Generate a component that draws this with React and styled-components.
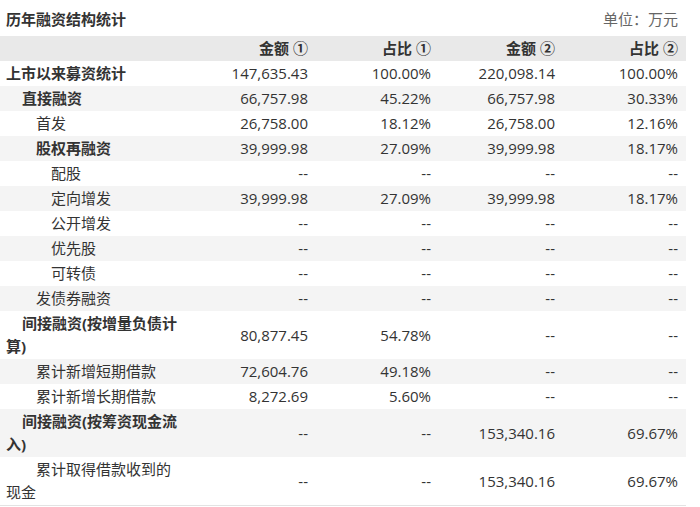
import styled, { createGlobalStyle } from "styled-components";

const GlobalStyle = createGlobalStyle`
  body {
    margin: 0;
    background: #fff;
    font-family: "Open Sans", "Noto Sans CJK SC", sans-serif;
    color: #333;
  }
`;

const Wrapper = styled.div`
  width: 686px;
`;

const TitleBar = styled.div`
  height: 36px;
  display: flex;
  justify-content: space-between;
  align-items: center;
  padding: 0 8px 0 6px;
`;

const Title = styled.h3`
  margin: 0;
  font-size: 15px;
  font-weight: bold;
  color: #333;
`;

const Unit = styled.span`
  font-size: 15px;
  color: #666;
`;

const Table = styled.table`
  width: 100%;
  border-collapse: collapse;
  table-layout: fixed;
  font-size: 15px;
  border-bottom: 1px solid #e3e3e3;
`;

const HeadRow = styled.tr`
  background: #e9e9e9;
`;

const HeadCell = styled.th`
  height: 25px;
  padding: 0 8px 0 6px;
  text-align: right;
  font-weight: bold;
  line-height: 23px;
`;

const Row = styled.tr`
  background: ${({ $odd }) => ($odd ? "#f4f4f4" : "#fff")};
`;

const NameCell = styled.td`
  padding: 1px 8px 1px 6px;
  line-height: 23px;
  text-indent: ${({ $level }) => [0, 16, 30, 45][$level]}px;
  font-weight: ${({ $bold }) => ($bold ? "bold" : "normal")};
  word-break: break-all;
`;

const NumCell = styled.td`
  padding: 1px 8px 1px 6px;
  line-height: 23px;
  text-align: right;
  white-space: nowrap;
`;

const rows = [
  ["上市以来募资统计", 0, true, "147,635.43", "100.00%", "220,098.14", "100.00%"],
  ["直接融资", 1, true, "66,757.98", "45.22%", "66,757.98", "30.33%"],
  ["首发", 2, false, "26,758.00", "18.12%", "26,758.00", "12.16%"],
  ["股权再融资", 2, true, "39,999.98", "27.09%", "39,999.98", "18.17%"],
  ["配股", 3, false, "--", "--", "--", "--"],
  ["定向增发", 3, false, "39,999.98", "27.09%", "39,999.98", "18.17%"],
  ["公开增发", 3, false, "--", "--", "--", "--"],
  ["优先股", 3, false, "--", "--", "--", "--"],
  ["可转债", 3, false, "--", "--", "--", "--"],
  ["发债券融资", 2, false, "--", "--", "--", "--"],
  ["间接融资(按增量负债计算)", 1, true, "80,877.45", "54.78%", "--", "--"],
  ["累计新增短期借款", 2, false, "72,604.76", "49.18%", "--", "--"],
  ["累计新增长期借款", 2, false, "8,272.69", "5.60%", "--", "--"],
  ["间接融资(按筹资现金流入)", 1, true, "--", "--", "153,340.16", "69.67%"],
  ["累计取得借款收到的现金", 2, false, "--", "--", "153,340.16", "69.67%"],
];

const App = () => {
  return (
    <Wrapper>
      <GlobalStyle />
      <TitleBar>
        <Title>历年融资结构统计</Title>
        <Unit>单位：万元</Unit>
      </TitleBar>
      <Table>
        <colgroup>
          <col style={{ width: 193 }} />
          <col style={{ width: 123 }} />
          <col style={{ width: 123 }} />
          <col style={{ width: 124 }} />
          <col style={{ width: 123 }} />
        </colgroup>
        <thead>
          <HeadRow>
            <HeadCell />
            <HeadCell>金额 ①</HeadCell>
            <HeadCell>占比 ①</HeadCell>
            <HeadCell>金额 ②</HeadCell>
            <HeadCell>占比 ②</HeadCell>
          </HeadRow>
        </thead>
        <tbody>
          {rows.map(([name, level, bold, ...vals], i) => (
            <Row key={name} $odd={i % 2 === 1}>
              <NameCell $level={level} $bold={bold}>
                {name}
              </NameCell>
              {vals.map((v, j) => (
                <NumCell key={j}>{v}</NumCell>
              ))}
            </Row>
          ))}
        </tbody>
      </Table>
    </Wrapper>
  );
};

export default App;
